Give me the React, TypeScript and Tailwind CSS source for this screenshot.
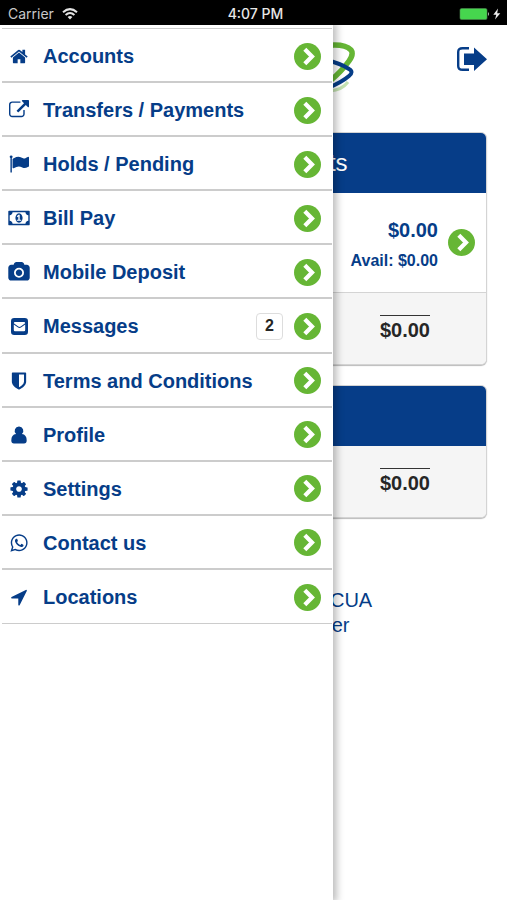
import type { ReactNode } from "react";

type GlyphName =
  | "home" | "external" | "flag" | "money" | "camera" | "envelope"
  | "shield" | "user" | "cog" | "whatsapp" | "arrow";

const glyphs: Record<GlyphName, { box: string; d: string; className: string }> = {
  home: {
    box: "64 0 1664 1792",
    className: "h-[19px] w-[18px]",
    d: "M1472 992v480q0 26-19 45t-45 19h-384v-384h-256v384h-384q-26 0-45-19t-19-45v-480q0-1 .5-3t.5-3l575-474 575 474q1 2 1 6zm223-69l-62 74q-8 9-21 11h-3q-13 0-21-7l-692-577-692 577q-12 8-24 7-13-2-21-11l-62-74q-8-10-7-23.5t11-21.5l719-599q32-26 76-26t76 26l244 204v-195q0-14 9-23t23-9h192q14 0 23 9t9 23v408l219 182q10 8 11 21.5t-7 23.5z",
  },
  external: {
    box: "0 0 1792 1792",
    className: "size-5",
    d: "M1408 928v320q0 119-84.5 203.5t-203.5 84.5h-832q-119 0-203.5-84.5t-84.5-203.5v-832q0-119 84.5-203.5t203.5-84.5h704q14 0 23 9t9 23v64q0 14-9 23t-23 9h-704q-66 0-113 47t-47 113v832q0 66 47 113t113 47h832q66 0 113-47t47-113v-320q0-14 9-23t23-9h64q14 0 23 9t9 23zm384-864v512q0 26-19 45t-45 19-45-19l-176-176-652 652q-10 10-23 10t-23-10l-114-114q-10-10-10-23t10-23l652-652-176-176q-19-19-19-45t19-45 45-19h512q26 0 45 19t19 45z",
  },
  flag: {
    box: "0 0 1792 1792",
    className: "size-5",
    d: "M320 256q0 72-64 110v1266q0 13-9.5 22.5t-22.5 9.5h-64q-13 0-22.5-9.5t-9.5-22.5v-1266q-64-38-64-110 0-53 37.5-90.5t90.5-37.5 90.5 37.5 37.5 90.5zm1472 64v763q0 25-12.5 38.5t-39.5 27.5q-215 116-369 116-61 0-123.5-22t-108.5-48-115.5-48-142.5-22q-192 0-464 146-17 9-33 9-26 0-45-19t-19-45v-742q0-32 31-55 21-14 79-43 236-120 421-120 107 0 200 29t219 88q38 19 88 19 54 0 117.5-21t110-47 88-47 54.5-21q26 0 45 19t19 45z",
  },
  money: {
    box: "0 0 1920 1792",
    className: "h-5 w-[22px]",
    d: "M768 1152h384v-96h-128v-448h-114l-148 137 77 80q42-37 55-57h2v288h-128v96zm512-256q0 70-21 142t-59.5 134-101.5 101-138 39-138-39-101.5-101-59.5-134-21-142 21-142 59.5-134 101.5-101 138-39 138 39 101.5 101 59.5 134 21 142zm512 256v-512q-106 0-181-75t-75-181h-1152q0 106-75 181t-181 75v512q106 0 181 75t75 181h1152q0-106 75-181t181-75zm128-832v1152q0 26-19 45t-45 19h-1792q-26 0-45-19t-19-45v-1152q0-26 19-45t45-19h1792q26 0 45 19t19 45z",
  },
  camera: {
    box: "0 0 1920 1792",
    className: "h-5 w-[22px]",
    d: "M960 672q119 0 203.5 84.5t84.5 203.5-84.5 203.5-203.5 84.5-203.5-84.5-84.5-203.5 84.5-203.5 203.5-84.5zm704-416q106 0 181 75t75 181v896q0 106-75 181t-181 75h-1408q-106 0-181-75t-75-181v-896q0-106 75-181t181-75h224l51-136q19-49 69.5-84.5t103.5-35.5h512q53 0 103.5 35.5t69.5 84.5l51 136h224zm-704 1152q185 0 316.5-131.5t131.5-316.5-131.5-316.5-316.5-131.5-316.5 131.5-131.5 316.5 131.5 316.5 316.5 131.5z",
  },
  envelope: {
    box: "0 0 17 17",
    className: "size-[17px]",
    d: "M3.2 0H13.8Q17 0 17 3.2V13.8Q17 17 13.8 17H3.2Q0 17 0 13.8V3.2Q0 0 3.2 0zM4 4Q2.8 4 2.8 5.2L7.3 8.5Q8.5 9.4 9.7 8.5L14.2 5.2Q14.2 4 13 4zM2.8 6.4V12Q2.8 13.2 4 13.2H13Q14.2 13.2 14.2 12V6.4L10.3 9.3Q8.5 10.5 6.7 9.3z",
  },
  shield: {
    box: "0 0 1792 1792",
    className: "size-5",
    d: "M1344 960v-640h-448v1137q119-63 213-137 235-184 235-360zm192-768v768q0 86-33.5 170.5t-83 150-118 127.5-126.5 103-121 77.5-89.5 49.5-42.5 20q-12 6-26 6t-26-6q-16-7-42.5-20t-89.5-49.5-121-77.5-126.5-103-118-127.5-83-150-33.5-170.5v-768q0-26 19-45t45-19h1152q26 0 45 19t19 45z",
  },
  user: {
    box: "0 0 16 18",
    className: "h-[18px] w-4",
    d: "M8 0.5A4.3 4.3 0 0 1 10.9 8Q15.7 8.5 15.7 14.5Q15.7 17.5 13 17.5H3Q0.3 17.5 0.3 14.5Q0.3 8.5 5.1 8A4.3 4.3 0 0 1 8 0.5z",
  },
  cog: {
    box: "0 0 1792 1792",
    className: "size-5",
    d: "M1152 896q0-106-75-181t-181-75-181 75-75 181 75 181 181 75 181-75 75-181zm512-109v222q0 12-8 23t-20 13l-185 28q-19 54-39 91 35 50 107 138 10 12 10 25t-9 23q-27 37-99 108t-94 71q-12 0-26-9l-138-108q-44 23-91 38-16 136-29 186-7 28-36 28h-222q-14 0-24.5-8.5t-11.5-21.5l-28-184q-49-16-90-37l-141 107q-10 9-25 9-14 0-25-11-126-114-165-168-7-10-7-23 0-12 8-23 15-21 51-66.5t54-70.5q-27-50-41-99l-183-27q-13-2-21-12.5t-8-23.5v-222q0-12 8-23t19-13l186-28q14-46 39-92-40-57-107-138-10-12-10-24 0-10 9-23 26-36 98.5-107.5t94.5-71.5q13 0 26 10l138 107q44-23 91-38 16-136 29-186 7-28 36-28h222q14 0 24.5 8.5t11.5 21.5l28 184q49 16 90 37l142-107q9-9 24-9 13 0 25 10 129 119 165 170 7 8 7 22 0 12-8 23-15 21-51 66.5t-54 70.5q26 50 41 98l183 28q13 2 21 12.5t8 23.5z",
  },
  whatsapp: {
    box: "0 0 1792 1792",
    className: "size-5",
    d: "M1113 974q13 0 97.5 44t89.5 53q2 5 2 15 0 33-17 76-16 39-71 65.5t-102 26.5q-57 0-190-62-98-45-170-118t-148-185q-72-107-71-194v-8q3-91 74-158 24-22 52-22 6 0 18 1.5t19 1.5q19 0 26.5 6.5t15.5 27.5q8 20 33 88t25 75q0 21-34.5 57.5t-34.5 46.5q0 7 5 15 34 73 102 137 56 53 151 101 12 7 22 7 15 0 54-48.5t52-48.5zm-203 530q127 0 243.5-50t200.5-134 134-200.5 50-243.5-50-243.5-134-200.5-200.5-134-243.5-50-243.5 50-200.5 134-134 200.5-50 243.5q0 203 120 368l-79 233 242-77q158 104 345 104zm0-1382q153 0 292.5 60t240.5 161 161 240.5 60 292.5-60 292.5-161 240.5-240.5 161-292.5 60q-195 0-365-94l-417 134 136-405q-108-178-108-389 0-153 60-292.5t161-240.5 240.5-161 292.5-60z",
  },
  arrow: {
    box: "0 0 1792 1792",
    className: "size-5",
    d: "M1593 349l-640 1280q-17 35-57 35-5 0-15-2-22-5-35.5-22.5t-13.5-39.5v-576h-576q-22 0-39.5-13.5t-22.5-35.5 4-42 29-30l1280-640q13-7 29-7 27 0 45 19 15 14 18.5 34.5t-6.5 39.5z",
  },
};

const menu: { label: string; icon: GlyphName; badge?: number }[] = [
  { label: "Accounts", icon: "home" },
  { label: "Transfers / Payments", icon: "external" },
  { label: "Holds / Pending", icon: "flag" },
  { label: "Bill Pay", icon: "money" },
  { label: "Mobile Deposit", icon: "camera" },
  { label: "Messages", icon: "envelope", badge: 2 },
  { label: "Terms and Conditions", icon: "shield" },
  { label: "Profile", icon: "user" },
  { label: "Settings", icon: "cog" },
  { label: "Contact us", icon: "whatsapp" },
  { label: "Locations", icon: "arrow" },
];

function Glyph({ name }: { name: GlyphName }) {
  const glyph = glyphs[name];
  return (
    <svg viewBox={glyph.box} className={glyph.className} fill="currentColor" fillRule="evenodd" aria-hidden="true">
      <path d={glyph.d} />
    </svg>
  );
}

function ChevronDisc() {
  return (
    <svg viewBox="0 0 27 27" className="size-[27px] shrink-0" aria-hidden="true">
      <circle cx="13.5" cy="13.5" r="13.5" fill="#66b635" />
      <path d="M10.8 6.2L18 13.5L10.8 20.8" fill="none" stroke="#fff" strokeWidth="4.2" />
    </svg>
  );
}

function StatusBar() {
  return (
    <div className="grid h-[25px] grid-cols-3 items-center bg-black pt-0.5 pr-1 pl-2 font-['Inter','Liberation_Sans',sans-serif] text-sm leading-5 text-[#c8c8c8]">
      <div className="flex items-center gap-2">
        <span>Carrier</span>
        <svg viewBox="0 0 16 12" className="h-3 w-4" fill="none" stroke="#e4e4e4" strokeWidth="2" aria-hidden="true">
          <path d="M1 4.3Q8-2 15 4.3" />
          <path d="M3.6 7Q8 3 12.4 7" />
          <path d="M5.6 8.9Q8 7 10.4 8.9L8 11.6z" fill="#e4e4e4" stroke="none" />
        </svg>
      </div>
      <span className="text-center font-medium text-[#e6e6e6]">4:07 PM</span>
      <svg viewBox="0 0 44 12" className="h-3 w-11 justify-self-end" role="img" aria-label="Battery charging">
        <rect x="1" y="0.5" width="27" height="11" rx="1.5" fill="#46d64e" stroke="#4d8a50" strokeWidth="0.6" />
        <path d="M29 4Q31 6 29 8z" fill="#b9b9b9" />
        <path d="M39 0.5L34.3 6.8H37.3L36 11.5L41.3 5.2H38.2z" fill="#eee" />
      </svg>
    </div>
  );
}

function Card({ title, children }: { title: string; children?: ReactNode }) {
  return (
    <section className="overflow-hidden rounded-md border border-[#d4d4d4] bg-white shadow-[0_1px_1px_#bbb]">
      <h2 className="flex h-[60px] items-center justify-center bg-[#063d88] pl-5 text-2xl text-white">{title}</h2>
      {children}
      <div className="flex h-[71px] justify-end bg-[#f5f5f5] pt-[22px] pr-14">
        <p className="h-fit border-t border-[#333] pt-0.5 text-xl leading-6 font-bold text-[#262626]">$0.00</p>
      </div>
    </section>
  );
}

export default function App() {
  return (
    <div className="flex min-h-screen flex-col bg-white font-['Liberation_Sans',Arial,sans-serif] text-[#063d88]">
      <StatusBar />
      <div className="relative flex-1 overflow-hidden">
        <header className="grid h-[107px] grid-cols-[1fr_auto_1fr] items-start px-5 pt-[17px]">
          <svg viewBox="0 0 204 52" className="col-start-2 h-[52px] w-[204px]" fill="none" role="img" aria-label="Credit union">
            <path d="M178 49Q190 48 196 40" stroke="#c5e3b2" strokeWidth="3" />
            <path d="M172 4Q192 1 199 8Q202 12 197 19Q190 29 178 39" stroke="#66b635" strokeWidth="5.5" />
            <path d="M174 18Q188 21 197 27Q202 30 197 34Q190 40 176 46" stroke="#063d88" strokeWidth="4" />
          </svg>
          <button type="button" aria-label="Sign out" className="mt-1 justify-self-end">
            <svg viewBox="0 0 31 26" className="h-[26px] w-[31px]" aria-hidden="true">
              <path d="M13 2.2H6.5Q2.2 2.2 2.2 6V20Q2.2 23.8 6.5 23.8H13" fill="none" stroke="#063d88" strokeWidth="2.4" />
              <path d="M8 7.5H18V1.5L31 13.2L18 25V19H8z" fill="#063d88" />
            </svg>
          </button>
        </header>

        <main className="flex flex-col gap-5 px-5">
          <Card title="Share Accounts">
            <div className="flex h-[100px] items-center justify-end gap-2.5 border-b border-[#d4d4d4] pr-[11px]">
              <div className="pt-1 text-right font-bold">
                <p className="text-xl leading-8">$0.00</p>
                <p className="text-base leading-[30px]">Avail: $0.00</p>
              </div>
              <button type="button" aria-label="Open account">
                <ChevronDisc />
              </button>
            </div>
          </Card>
          <Card title="Loans" />
        </main>

        <footer className="pt-[70px] pr-1.5 text-center text-xl leading-[25px]">
          <p>Federally Insured by NCUA</p>
          <p>Equal Housing Lender</p>
        </footer>

        <nav className="absolute inset-y-0 left-0 w-[333px] bg-white pt-[3px] pr-px pl-0.5 shadow-[2px_0_7px_2px_rgba(0,0,0,0.25)]">
          <ul className="grid h-[596px] auto-rows-fr border-t border-[#ccc]">
            {menu.map((item) => (
              <li key={item.label} className="border-b-2 border-[#ccc] last:border-b">
                <a href="#" className="flex h-full items-center pt-0.5 pr-[11px] pl-1.5">
                  <span className="flex w-[22px] justify-center">
                    <Glyph name={item.icon} />
                  </span>
                  <span className="flex-1 pl-[13px] text-xl leading-6 font-bold">{item.label}</span>
                  {item.badge !== undefined && (
                    <span className="mr-[11px] flex size-[27px] items-center justify-center rounded border border-[#ddd] text-base leading-5 font-bold text-[#262626]">
                      {item.badge}
                    </span>
                  )}
                  <ChevronDisc />
                </a>
              </li>
            ))}
          </ul>
        </nav>
      </div>
    </div>
  );
}
